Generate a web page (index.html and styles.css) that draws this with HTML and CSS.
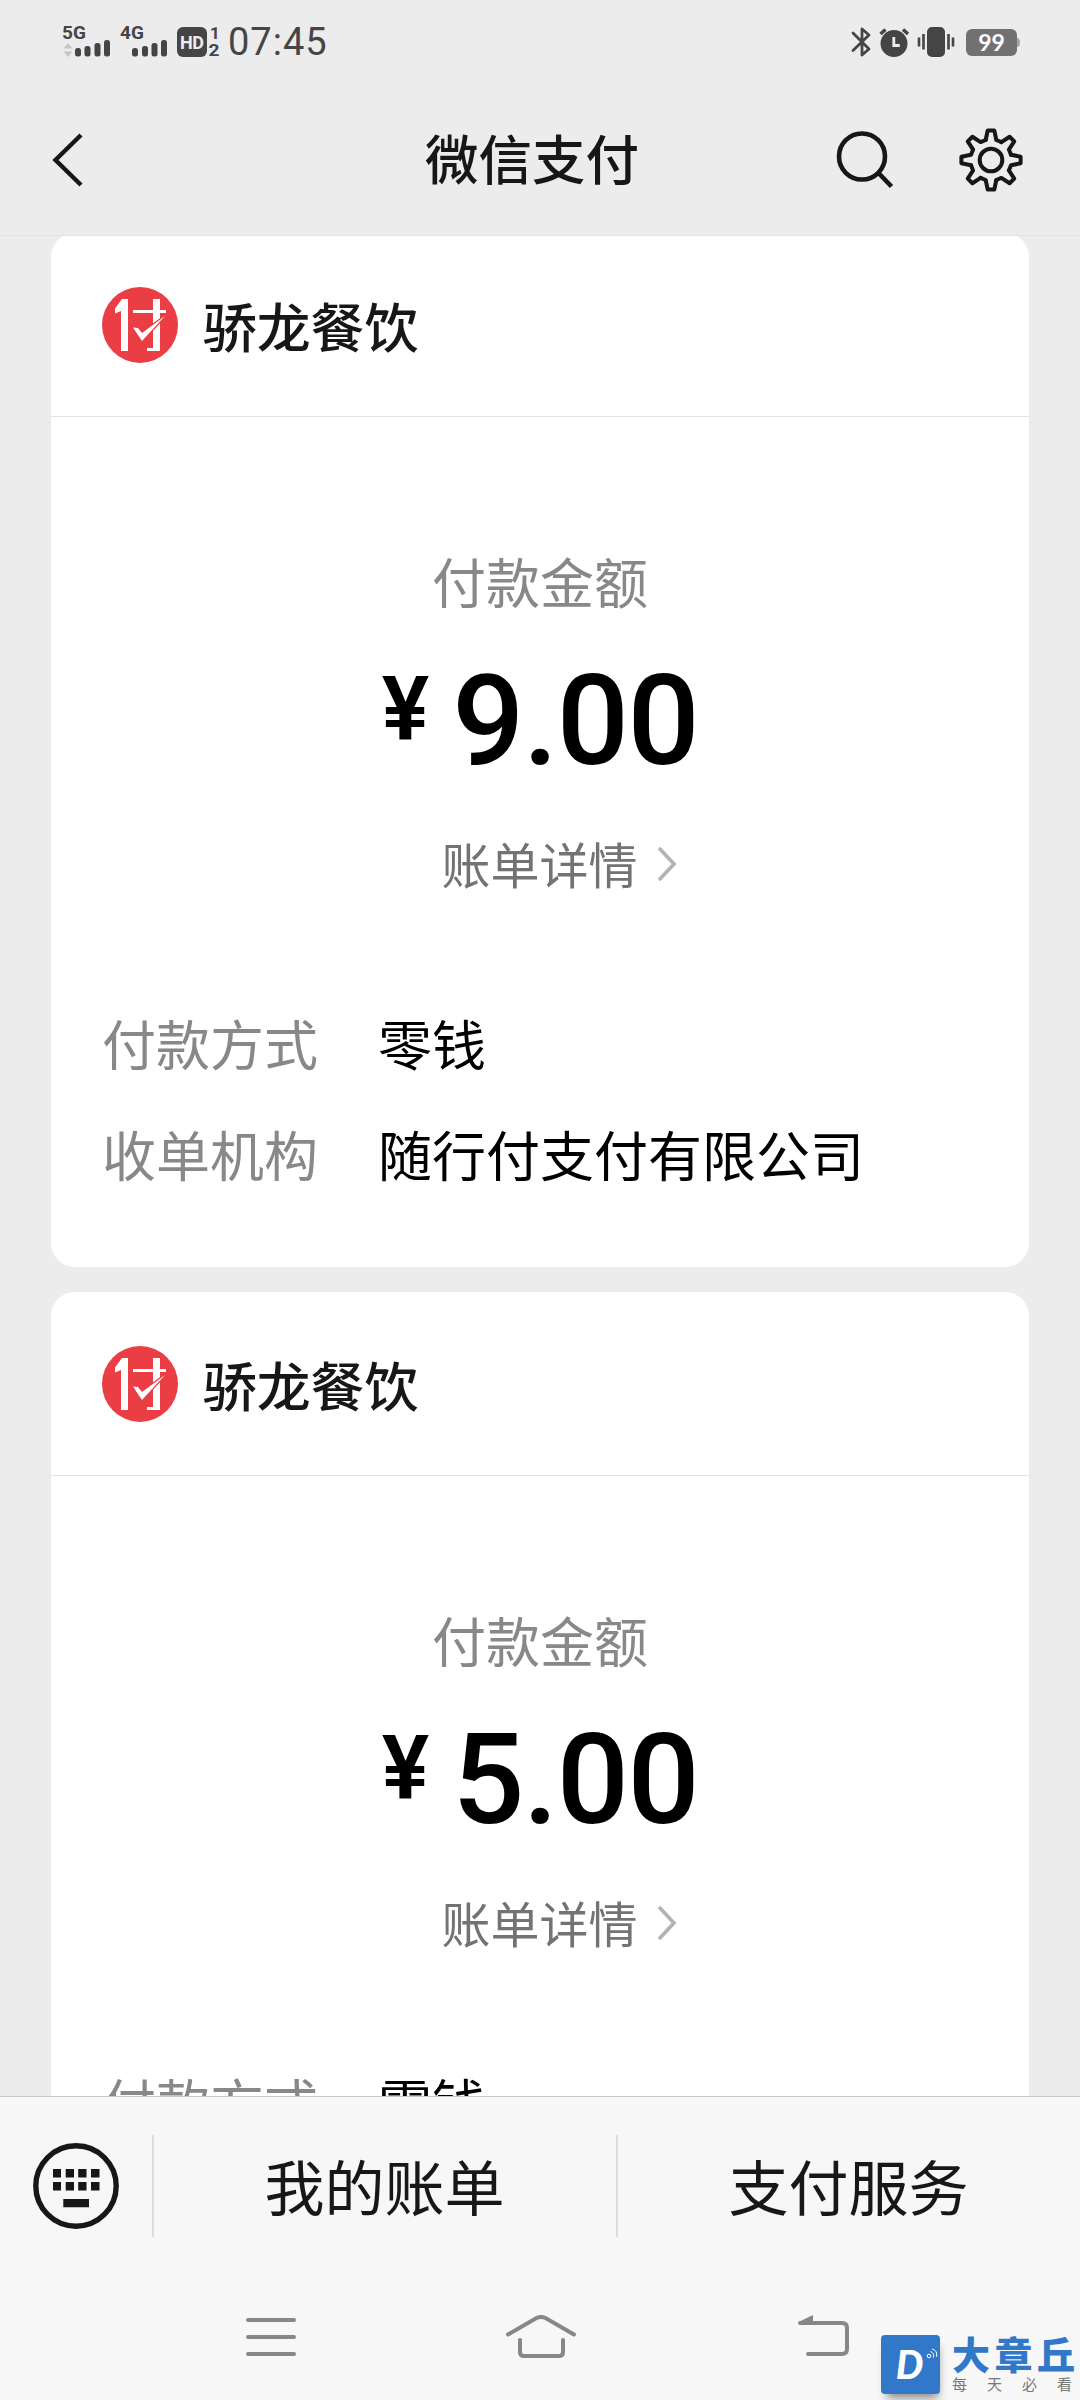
FILE: index.html
```html
<!DOCTYPE html>
<html lang="zh-CN">
<head>
<meta charset="utf-8">
<title>微信支付</title>
<link rel="stylesheet" href="styles.css">
</head>
<body>
<svg class="defs" width="0" height="0" aria-hidden="true">
  <defs>
    <symbol id="merchant" viewBox="0 0 76 76">
      <circle cx="38" cy="38" r="38" fill="#ea3d44"/>
      <path d="M13 21.5 20 12h6v52h-7V24l-6 2.500z" fill="#fff"/>
      <path d="M31 23h33v3H31zM51 12h7v52H45v-3h6z" fill="#fff"/>
      <path d="M31 40.500 36 41l4 5L63 29 40 54z" fill="#fff" stroke="#ea3d44" stroke-width="2.500" paint-order="stroke"/>
    </symbol>
    <symbol id="chevron" viewBox="0 0 20 38">
      <path d="M2 3 17 19 2 35" fill="none" stroke="#b2b2b2" stroke-width="3.600"/>
    </symbol>
    <path id="tooth" d="M-5.300-20-3.300-29.600H3.300L5.300-20 10.400-17.900"/>
  </defs>
</svg>
<div class="screen">
  <header class="top">
    <div class="status">
      <svg class="signals" width="160" height="44" viewBox="60 20 160 44" fill="#454545">
        <text class="net" x="62" y="39" textLength="24">5G</text>
        <path d="m68 43 4.500 5.500h-9zM68 57l4.500-5.500h-9z" fill="#c6c6c6"/>
        <rect x="75" y="48" width="6" height="8.500" rx="2.500"/><rect x="84.500" y="46" width="6" height="10.500" rx="2.500"/><rect x="94.500" y="43" width="6" height="13.500" rx="2.500"/><rect x="104" y="40" width="6" height="16.500" rx="2.500"/>
        <text class="net" x="120" y="39" textLength="24">4G</text>
        <rect x="132" y="48" width="6" height="8.500" rx="2.500"/><rect x="142" y="46" width="6" height="10.500" rx="2.500"/><rect x="151.500" y="43" width="6" height="13.500" rx="2.500"/><rect x="161" y="40" width="6" height="16.500" rx="2.500"/>
        <rect x="177" y="27" width="30" height="30" rx="6"/>
        <text class="hd" x="180" y="48.500" textLength="24" fill="#ececec">HD</text>
        <text class="sim" x="210" y="39">1</text>
        <text class="sim" x="208.500" y="56" textLength="11" lengthAdjust="spacingAndGlyphs">2</text>
      </svg>
      <span class="clock">07:45</span>
      <svg class="indicators" width="172" height="44" viewBox="850 20 172 44" fill="#454545">
        <path d="m853 33 16 16-7 6V29l7 6-16 15.500" fill="none" stroke="#454545" stroke-width="2.800" stroke-linejoin="round" stroke-linecap="round"/>
        <circle cx="894" cy="43.500" r="13.500"/>
        <path d="m880.500 34 5-4.500M908 34l-5-4.500" stroke="#454545" stroke-width="3.500"/>
        <path d="M893.800 37v8.500h6" fill="none" stroke="#ececec" stroke-width="2.800"/>
        <rect x="927" y="27" width="18" height="30" rx="5"/>
        <path d="M919 37.500v9M923.500 34v15.500M948.500 34v15.500M953 37.500v9" stroke="#454545" stroke-width="2.600"/>
        <rect x="966" y="29" width="51" height="27" rx="6" fill="#717171"/>
        <path d="M1017 38q3 0 3 4.500t-3 4.500z" fill="#a5a5a5"/>
        <text class="charge" x="991.500" y="51" text-anchor="middle" fill="#fff">99</text>
      </svg>
    </div>
    <nav class="nav">
      <svg class="back" width="40" height="60" viewBox="0 0 40 60"><path d="M32 5 6.500 30 32 55" fill="none" stroke="#171717" stroke-width="4.400"/></svg>
      <h1 class="title">微信支付</h1>
      <div class="actions">
        <svg width="60" height="60" viewBox="832 130 60 60" fill="none" stroke="#171717" stroke-width="4.600" overflow="visible"><circle cx="862" cy="156.500" r="23"/><path d="m878.500 173 13 13.500"/></svg>
        <svg width="68" height="68" viewBox="-34 -34 68 68" fill="none" stroke="#171717" stroke-width="4" stroke-linejoin="round" stroke-linecap="round">
          <circle r="11.300"/>
          <use href="#tooth"/><use href="#tooth" transform="rotate(45)"/><use href="#tooth" transform="rotate(90)"/><use href="#tooth" transform="rotate(135)"/><use href="#tooth" transform="rotate(180)"/><use href="#tooth" transform="rotate(225)"/><use href="#tooth" transform="rotate(270)"/><use href="#tooth" transform="rotate(315)"/>
        </svg>
      </div>
    </nav>
  </header>

  <main class="feed">
    <article class="card">
      <div class="card-head"><svg width="76" height="76"><use href="#merchant"/></svg><h2 class="name">骄龙餐饮</h2></div>
      <p class="label">付款金额</p>
      <p class="amount"><span class="yen">¥</span><span class="digits">9.00</span></p>
      <a class="detail">账单详情<svg width="20" height="38"><use href="#chevron"/></svg></a>
      <dl class="facts"><dt>付款方式</dt><dd>零钱</dd><dt>收单机构</dt><dd>随行付支付有限公司</dd></dl>
    </article>
    <article class="card">
      <div class="card-head"><svg width="76" height="76"><use href="#merchant"/></svg><h2 class="name">骄龙餐饮</h2></div>
      <p class="label">付款金额</p>
      <p class="amount"><span class="yen">¥</span><span class="digits">5.00</span></p>
      <a class="detail">账单详情<svg width="20" height="38"><use href="#chevron"/></svg></a>
      <dl class="facts"><dt>付款方式</dt><dd>零钱</dd></dl>
    </article>
  </main>

  <footer class="bottom">
    <div class="menu">
      <div class="keyboard">
        <svg width="88" height="88" viewBox="32 2141 88 88" fill="#171717">
          <circle cx="76" cy="2185" r="40.200" fill="none" stroke="#171717" stroke-width="5.400"/>
          <path d="M53 2168h8v8.500h-8zM65.700 2168h8.300v8.500h-8.300zM78.200 2168h8.300v8.500h-8.300zM91 2168h8.500v8.500H91zM53 2181h8v8.500h-8zM65.700 2181h8.300v8.500h-8.300zM78.200 2181h8.300v8.500h-8.300zM91 2181h8.500v8.500H91zM63.300 2198H89v8.300H63.300z"/>
        </svg>
      </div>
      <a class="entry">我的账单</a>
      <a class="entry">支付服务</a>
    </div>
    <div class="system">
      <svg width="56" height="48" viewBox="243 2313 56 48" stroke="#878787" stroke-width="4" stroke-linecap="round"><path d="M248 2320h46M248 2337h46M248 2354h46"/></svg>
      <svg width="72" height="48" viewBox="505 2313 72 48" fill="none" stroke="#878787" stroke-width="4" stroke-linecap="round"><path d="m508 2334.500 28.500-16.500q4.500-2 9 0l28.500 16.500M520 2340v12q0 4 4 4h35q4 0 4-4v-12"/></svg>
      <svg width="56" height="48" viewBox="796 2313 56 48" fill="none" stroke="#878787" stroke-width="4" stroke-linecap="round"><path d="M800 2323h42q5 0 5 5v21q0 5-5 5h-34"/><path d="m800 2322.500 12-6v6z" fill="#878787" stroke-width="2"/></svg>
    </div>
  </footer>

  <aside class="watermark">
    <div class="badge"><span class="badge-letter">D</span>
      <svg class="waves" width="12" height="12" viewBox="0 0 12 12" fill="none" stroke="#fff"><circle cx="3" cy="8" r="1.800"/><path d="M4.500 3.500q4 1.500 3 6M6 .8q6 2 4.500 8"/></svg>
    </div>
    <div class="brand"><strong>大章丘</strong><small>每天必看</small></div>
  </aside>
</div>
</body>
</html>
```
FILE: styles.css
```css
* { box-sizing: border-box; }
body {
  margin: 0;
  background: #ececec;
  font-family: "Noto Sans CJK SC", sans-serif;
  color: #171717;
}
h1, h2, p, dl, dd { margin: 0; font-weight: 400; }
svg { display: block; flex: none; }
.defs { position: absolute; }
.screen {
  position: relative;
  width: 1080px;
  height: 2400px;
  overflow: hidden;
  display: flex;
  flex-direction: column;
}

.top { height: 236px; background: #ececec; border-bottom: 1px solid #e4e4e4; }
.status { height: 84px; padding: 0 58px 0 60px; display: flex; align-items: center; }
.net { font: 700 19px Roboto, sans-serif; }
.hd { font: 700 18px Roboto, sans-serif; }
.sim { font: 700 17px Roboto, sans-serif; }
.charge { font: 700 23px Lato, sans-serif; }
.clock { margin-left: 8px; font: 400 38px/44px Roboto, sans-serif; color: #454545; letter-spacing: 1px; }
.indicators { margin-left: auto; }

.nav { height: 151px; padding: 0 55px 0 49px; display: grid; grid-template-columns: 376px 1fr 240px; align-items: center; }
.title { font-size: 53.500px; line-height: 80px; font-weight: 500; transform: translateY(-3px); }
.actions { display: flex; justify-content: flex-end; align-items: center; gap: 65px; }

.feed { height: 1860px; overflow: hidden; }
.card {
  width: 978px;
  height: 1034px;
  margin: 0 auto 25px 51px;
  background: #fff;
  border-radius: 24px;
  display: flex;
  flex-direction: column;
  align-items: center;
}
.card:first-child { margin-top: -3px; }
.card-head {
  width: 100%;
  height: 184px;
  padding: 1px 51px 0;
  border-bottom: 1px solid #e4e4e4;
  display: flex;
  align-items: center;
  gap: 25px;
}
.name { font-size: 53.800px; line-height: 78px; font-weight: 500; }
.label { margin-top: 124px; font-size: 54px; line-height: 80px; color: #888; }
.amount { height: 202px; padding: 25px 0 0; display: flex; justify-content: center; color: #000; font-family: Roboto, sans-serif; font-weight: 500; }
.yen { margin-right: 24px; font-size: 89px; line-height: 128px; font-weight: 600; letter-spacing: -1px; }
.digits { font-size: 127px; line-height: 150px; letter-spacing: -1.500px; }
.detail { padding-left: 38px; display: flex; align-items: center; gap: 19px; font-size: 49px; line-height: 80px; color: #737373; }
.detail svg { margin-top: 2px; }
.facts {
  width: 100%;
  margin-top: 85px;
  padding: 0 51px;
  display: grid;
  grid-template-columns: 276px 1fr;
  font-size: 54px;
  line-height: 110.500px;
}
.facts dt { color: #888; }
.facts dd { color: #000; }

.bottom { height: 304px; background: #f7f7f7; border-top: 1px solid #c8c8c8; }
.menu { height: 178px; display: grid; grid-template-columns: 152px 464px 464px; align-items: center; }
.keyboard { padding-left: 32px; }
.entry { height: 102px; padding-right: 1px; border-left: 2px solid #dcdcdc; font-size: 60px; line-height: 99px; text-align: center; }
.system { height: 125px; padding: 38px 0 0 243px; display: grid; grid-template-columns: 262px 291px 56px; }

/* Site mark laid over the corner of the screen */
.watermark { position: absolute; left: 881px; top: 2335px; display: flex; gap: 12px; }
.badge {
  position: relative;
  width: 59px;
  height: 59px;
  border-radius: 4px;
  background: #3178c8;
  box-shadow: 2px 8px 9px -4px rgba(0, 0, 0, .45);
  display: flex;
  align-items: center;
  justify-content: center;
}
.badge-letter { padding-right: 2px; font: italic 900 39px/59px Lato, sans-serif; color: #fff; }
.waves { position: absolute; right: 2px; top: 13px; }
.brand { display: flex; flex-direction: column; }
.brand strong { font-size: 38px; line-height: 36px; font-weight: 900; letter-spacing: 4.500px; color: #3178c8; white-space: nowrap; }
.brand small { margin-top: 3px; font-size: 15px; line-height: 20px; letter-spacing: 20px; color: #777; white-space: nowrap; }
```
